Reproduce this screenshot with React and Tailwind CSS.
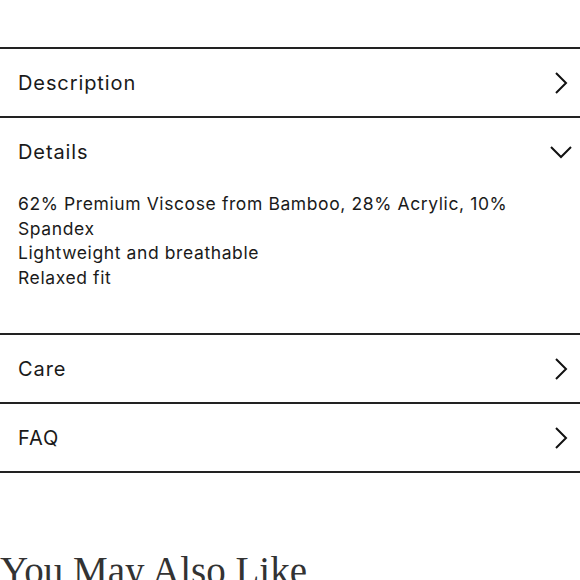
import React from "react";

const ChevronRight = () => (
  <svg width="14" height="24" viewBox="0 0 14 24" fill="none" className="shrink-0 mr-[12px]">
    <path d="M2 2 L12 12 L2 22" stroke="#111" strokeWidth="2" />
  </svg>
);

const ChevronDown = () => (
  <svg width="24" height="14" viewBox="0 0 24 14" fill="none" className="shrink-0 mr-[7px]">
    <path d="M2 2 L12 12 L22 2" stroke="#111" strokeWidth="2" />
  </svg>
);

function Row({ title, open, children }) {
  return (
    <div className="border-t-2 border-[#222]">
      <div className="h-[67px] flex items-center justify-between pl-[18px]">
        <span className="text-[20px] tracking-[0.9px] text-[#1a1a1a]">{title}</span>
        {open ? <ChevronDown /> : <ChevronRight />}
      </div>
      {children}
    </div>
  );
}

export default function App() {
  return (
    <div className="w-[580px] h-[580px] overflow-hidden bg-white" style={{ fontFamily: "Inter, 'Open Sans', sans-serif" }}>
      <div className="h-[47px]" />
      <Row title="Description" />
      <Row title="Details" open>
        <div className="pl-[18px] pr-[60px] pt-[7px] pb-[43px] text-[17.5px] tracking-[0.6px] leading-[24.5px] text-[#1a1a1a]">
          <p>62% Premium Viscose from Bamboo, 28% Acrylic, 10% Spandex</p>
          <p>Lightweight and breathable</p>
          <p>Relaxed fit</p>
        </div>
      </Row>
      <Row title="Care" />
      <Row title="FAQ" />
      <div className="border-t-2 border-[#222]" />
      <h2
        className="mt-[78px] text-[39px] leading-none text-[#333] whitespace-nowrap"
        style={{ fontFamily: "'Liberation Serif', serif" }}
      >
        You May Also Like
      </h2>
    </div>
  );
}
